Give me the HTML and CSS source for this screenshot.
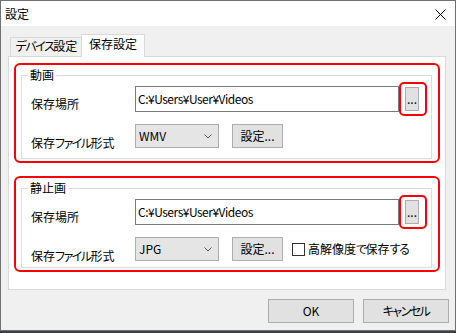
FILE: index.html
```html
<!DOCTYPE html>
<html lang="ja">
<head>
<meta charset="utf-8">
<title>設定</title>
<link rel="stylesheet" href="styles.css">
</head>
<body>
<div class="window">
  <div class="titlebar">
    <span class="title">設定</span>
    <svg class="close" width="11" height="11" viewBox="0 0 11 11"><path d="M0.5 0.5 L10.5 10.5 M10.5 0.5 L0.5 10.5" stroke="#000" stroke-width="1" fill="none"/></svg>
  </div>
  <div class="client">
    <div class="tabs">
      <div class="tab"><span class="kana">デバイス</span>設定</div>
      <div class="tab tab-active">保存設定</div>
    </div>
    <div class="panel">
      <div class="hl">
        <fieldset class="group group-a">
          <legend>動画</legend>
          <div class="grid">
            <div class="label label-1">保存場所</div>
            <div class="row">
              <div class="textbox">C:¥Users¥User¥Videos</div>
              <div class="hl-sm"><button class="btn btn-browse">...</button></div>
            </div>
            <div class="label label-2">保存<span class="kana">ファイル</span>形式</div>
            <div class="row">
              <div class="combo"><span>WMV</span><svg width="8" height="5" viewBox="0 0 8 5"><path d="M0.5 0.5 L4 4 L7.5 0.5" stroke="#555" stroke-width="1" fill="none"/></svg></div>
              <button class="btn btn-set">設定...</button>
            </div>
          </div>
        </fieldset>
      </div>
      <div class="hl">
        <fieldset class="group group-b">
          <legend>静止画</legend>
          <div class="grid">
            <div class="label label-1">保存場所</div>
            <div class="row">
              <div class="textbox">C:¥Users¥User¥Videos</div>
              <div class="hl-sm"><button class="btn btn-browse">...</button></div>
            </div>
            <div class="label label-2">保存<span class="kana">ファイル</span>形式</div>
            <div class="row">
              <div class="combo"><span>JPG</span><svg width="8" height="5" viewBox="0 0 8 5"><path d="M0.5 0.5 L4 4 L7.5 0.5" stroke="#555" stroke-width="1" fill="none"/></svg></div>
              <button class="btn btn-set">設定...</button>
              <label class="check"><span class="box"></span><span>高解像度<span class="kana">で</span>保存<span class="kana">する</span></span></label>
            </div>
          </div>
        </fieldset>
      </div>
    </div>
    <div class="footer">
      <button class="btn btn-dlg">OK</button>
      <button class="btn btn-dlg"><span class="kana">キャンセル</span></button>
    </div>
  </div>
</div>
</body>
</html>
```

FILE: styles.css
```css
* { box-sizing: border-box; }
html, body { margin: 0; padding: 0; }
body {
  width: 456px;
  height: 333px;
  overflow: hidden;
  background: #3a3e46;
  font-family: "Noto Sans CJK JP", "Noto Sans", sans-serif;
  font-size: 12px;
  line-height: 14px;
  color: #000;
  font-feature-settings: "palt";
}
.kana { letter-spacing: -1.5px; }
.window {
  width: 456px;
  height: 331px;
  border: 1px solid #707070;
  background: #f0f0f0;
  display: flex;
  flex-direction: column;
}
.titlebar {
  height: 25px;
  flex: none;
  background: #fff;
  display: flex;
  align-items: center;
  justify-content: space-between;
  padding: 0 9px 0 4px;
}
.close { display: block; margin-top: 1px; }
.client {
  flex: 1;
  padding: 8px 6px 0 7px;
}
.tabs {
  display: flex;
  align-items: flex-end;
  height: 22px;
}
.tab {
  width: 73px;
  height: 19px;
  margin-left: 2px;
  border: 1px solid #d9d9d9;
  border-bottom: none;
  background: #f0f0f0;
  text-align: center;
  padding-top: 1px;
}
.tab-active {
  width: 64px;
  height: 23px;
  margin-left: -2px;
  margin-bottom: -1px;
  background: #fff;
  padding-top: 2px;
  position: relative;
  z-index: 1;
}
.panel {
  width: 438px;
  height: 234px;
  background: #fff;
  border: 1px solid #d9d9d9;
  padding: 6px 0 0 5px;
}
.hl {
  width: 426px;
  border: 2px solid #ff0000;
  border-radius: 6px;
  padding: 3px 6px 2px 5px;
}
.hl + .hl { margin-top: 13px; }
.group {
  margin: 0;
  min-width: 0;
  border: 1px solid #dcdcdc;
  padding: 0 9px 10px 9px;
}
.group-b { padding-bottom: 6px; }
.group legend {
  padding: 0 2px;
  margin-left: -3px;
  line-height: 14px;
}
.grid {
  display: grid;
  grid-template-columns: 104px auto;
  grid-template-rows: 34px 24px;
  row-gap: 8px;
}
.label-1 { padding-top: 15px; }
.label-2 { padding-top: 12px; }
.row {
  display: flex;
  align-items: center;
}
.textbox {
  width: 264px;
  height: 26px;
  border: 1px solid #7a7a7a;
  background: #fff;
  padding-left: 2px;
  line-height: 23px;
  white-space: nowrap;
  letter-spacing: -0.5px;
}
.hl-sm {
  width: 28px;
  height: 34px;
  border: 2px solid #ff0000;
  border-radius: 5px;
  padding: 3px 6px 3px 4px;
}
.btn {
  font: inherit;
  font-feature-settings: "palt";
  color: #000;
  background: #e1e1e1;
  border: 1px solid #adadad;
  height: 24px;
  padding: 0;
  margin: 0;
  line-height: 20px;
  text-align: center;
}
.btn-browse {
  display: block;
  width: 14px;
  height: 24px;
}
.combo {
  width: 84px;
  height: 24px;
  background: #e5e5e5;
  border: 1px solid #acacac;
  display: flex;
  align-items: center;
  justify-content: space-between;
  padding: 0 6px 0 3px;
}
.combo svg { display: block; margin-top: 1px; }
.btn-set {
  width: 51px;
  margin-left: 13px;
}
.check {
  display: flex;
  align-items: center;
  gap: 3px;
  margin-left: 9px;
}
.box {
  width: 13px;
  height: 13px;
  border: 1px solid #333;
  background: #fff;
}
.footer {
  display: flex;
  justify-content: flex-end;
  gap: 9px;
  margin-top: 9px;
}
.btn-dlg { width: 86px; }
```
